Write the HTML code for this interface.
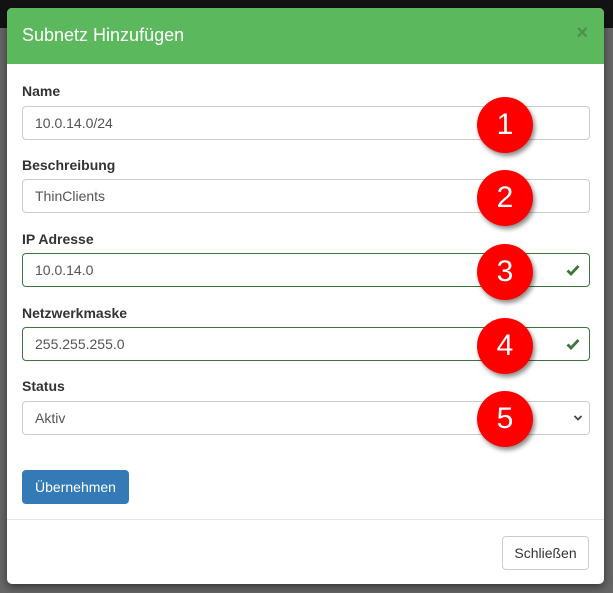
<!DOCTYPE html><html><head><style>
body{margin:0;width:613px;height:593px;background:#676767;position:relative;overflow:hidden;font-family:"Liberation Sans",sans-serif;font-size:14px;color:#555}
.top{position:absolute;left:0;top:0;width:613px;height:28px;background:#131313}
.m{position:absolute;left:7px;top:8px;width:597px;height:576px;background:#fff;border-radius:5px;overflow:hidden;box-shadow:0 3px 9px rgba(0,0,0,.5)}
.h{height:56px;background:#5cb85c;color:#fff;font-size:18px;line-height:54px;padding-left:15px;position:relative}
.x{position:absolute;right:16px;top:-2px;font-weight:bold;font-size:20px;color:#3e7c3e;opacity:.6}
.l{position:absolute;left:15px;font-weight:bold;color:#333}
.i{position:absolute;left:15px;width:568px;height:34px;box-sizing:border-box;border:1px solid #ccc;border-radius:4px;padding-left:12px;line-height:32px;color:#555}
.g{border-color:#3c763d}
.ck{position:absolute;right:9px;top:10px}
.c{position:absolute;left:470px;width:56px;height:56px;border-radius:50%;background:#f00;color:#fff;font-size:30px;text-align:center;line-height:56px;box-shadow:2px 3px 5px rgba(0,0,0,.45)}
.b{position:absolute;left:15px;top:462px;width:107px;height:34px;background:#337ab7;border-radius:4px;color:#fff;text-align:center;line-height:34px}
.hr{position:absolute;left:0;top:511px;width:597px;border-top:1px solid #e5e5e5}
.s{position:absolute;left:495px;top:528px;width:87px;height:34px;box-sizing:border-box;border:1px solid #ccc;border-radius:4px;color:#333;text-align:center;line-height:32px}
</style></head><body>
<div class="top"></div>
<div class="m">
<div class="h">Subnetz Hinzufügen<span class="x">×</span></div>
<div class="l" style="top:75px">Name</div>
<div class="i" style="top:98px">10.0.14.0/24</div>
<div class="l" style="top:149px">Beschreibung</div>
<div class="i" style="top:171px">ThinClients</div>
<div class="l" style="top:223px">IP Adresse</div>
<div class="i g" style="top:245px">10.0.14.0<svg class="ck" width="14" height="12" viewBox="0 0 14 12"><path d="M1.5 6.5L5 10L12.5 2" stroke="#3c763d" stroke-width="2.8" fill="none"/></svg></div>
<div class="l" style="top:297px">Netzwerkmaske</div>
<div class="i g" style="top:319px">255.255.255.0<svg class="ck" width="14" height="12" viewBox="0 0 14 12"><path d="M1.5 6.5L5 10L12.5 2" stroke="#3c763d" stroke-width="2.8" fill="none"/></svg></div>
<div class="l" style="top:370px">Status</div>
<div class="i" style="top:393px">Aktiv<svg class="ck" style="top:12px;right:6px" width="10" height="8" viewBox="0 0 10 8"><path d="M1.5 2L5 5.5L8.5 2" stroke="#444" stroke-width="1.8" fill="none"/></svg></div>
<div class="c" style="top:89px">1</div>
<div class="c" style="top:162px">2</div>
<div class="c" style="top:236px">3</div>
<div class="c" style="top:310px">4</div>
<div class="c" style="top:383px">5</div>
<div class="b">Übernehmen</div>
<div class="hr"></div>
<div class="s">Schließen</div>
</div>
</body></html>
